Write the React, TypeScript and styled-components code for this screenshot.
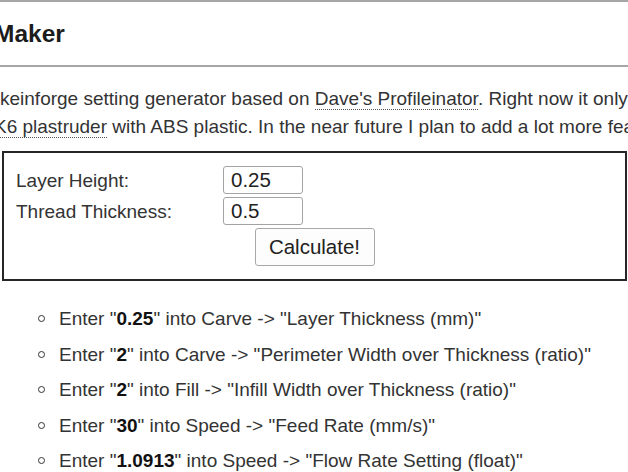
import React from 'react';
import styled, { createGlobalStyle } from 'styled-components';

const GlobalStyle = createGlobalStyle`
  html, body {
    margin: 0;
    padding: 0;
    background: #fff;
    overflow: hidden;
  }
  body {
    width: 628px;
    height: 472px;
    font-family: "Liberation Sans", Arial, sans-serif;
    color: #333;
  }
`;

type Step = { value: string; tab: string; field: string };

const steps: Step[] = [
  { value: '0.25', tab: 'Carve', field: 'Layer Thickness (mm)' },
  { value: '2', tab: 'Carve', field: 'Perimeter Width over Thickness (ratio)' },
  { value: '2', tab: 'Fill', field: 'Infill Width over Thickness (ratio)' },
  { value: '30', tab: 'Speed', field: 'Feed Rate (mm/s)' },
  { value: '1.0913', tab: 'Speed', field: 'Flow Rate Setting (float)' },
];

const Page = styled.div`
  width: 628px;
  overflow: hidden;
`;

const Header = styled.h1`
  margin: 0;
  border-top: 2px solid #a6a6a6;
  border-bottom: 2px solid #a6a6a6;
  padding: 18px 0 17px;
  font-size: 24.5px;
  line-height: 28px;
  font-weight: bold;
  color: #1c1c1c;
  white-space: nowrap;
`;

const Clipped = styled.span<{ $shift: number }>`
  display: block;
  margin-left: ${(p) => p.$shift}px;
  white-space: nowrap;
`;

const Intro = styled.p`
  margin: 18px 0 10px;
  font-size: 19px;
  line-height: 28px;
`;

const Link = styled.a`
  color: inherit;
  text-decoration: none;
  border-bottom: 1px dotted #555;
`;

const Calculator = styled.form`
  margin: 0 1px 0 2px;
  border: 2px solid #262626;
  padding: 13px 12px;
  display: flex;
  flex-direction: column;
  gap: 3px;
`;

const Fields = styled.div`
  display: grid;
  grid-template-columns: 207px 80px;
  grid-auto-rows: 28px;
  row-gap: 3px;
  align-items: center;
`;

const Label = styled.label`
  font-size: 19px;
  line-height: 28px;
  transform: translateY(1px);
`;

const Field = styled.input`
  box-sizing: border-box;
  width: 80px;
  height: 28px;
  border: 1px solid #a3a3a3;
  border-radius: 3px;
  padding: 0 7px;
  font-family: inherit;
  font-size: 20.5px;
  color: #222;
  outline: none;
`;

const ButtonRow = styled.div`
  display: flex;
  justify-content: center;
`;

const Button = styled.button`
  box-sizing: border-box;
  width: 120px;
  height: 38px;
  border: 1px solid #a8a8a8;
  border-radius: 3px;
  background: #fdfdfd;
  font-family: inherit;
  font-size: 20.5px;
  color: #222;
  padding: 0;
`;

const Steps = styled.ul`
  margin: 20px 0 0;
  padding: 0 0 0 59px;
  list-style: none;
  font-size: 19px;
  line-height: 35.5px;
`;

const StepItem = styled.li`
  position: relative;
  white-space: nowrap;

  &::before {
    content: '';
    position: absolute;
    left: -21px;
    top: 14px;
    width: 5px;
    height: 5px;
    border: 1.6px solid #333;
    border-radius: 50%;
  }
`;

const Value = styled.b`
  color: #111;
`;

export default function App() {
  return (
    <Page>
      <GlobalStyle />
      <Header>
        <Clipped $shift={-6}>Maker</Clipped>
      </Header>
      <Intro>
        <Clipped $shift={0}>
          keinforge setting generator based on <Link href="#">Dave's Profileinator</Link>. Right now it only
          supports the
        </Clipped>
        <Clipped $shift={-6}>
          <Link href="#">K6 plastruder</Link> with ABS plastic. In the near future I plan to add a lot more features.
        </Clipped>
      </Intro>
      <Calculator onSubmit={(e) => e.preventDefault()}>
        <Fields>
          <Label>Layer Height:</Label>
          <Field defaultValue="0.25" />
          <Label>Thread Thickness:</Label>
          <Field defaultValue="0.5" />
        </Fields>
        <ButtonRow>
          <Button type="submit">Calculate!</Button>
        </ButtonRow>
      </Calculator>
      <Steps>
        {steps.map((s, i) => (
          <StepItem key={i}>
            Enter "<Value>{s.value}</Value>" into {s.tab} -&gt; "{s.field}"
          </StepItem>
        ))}
      </Steps>
    </Page>
  );
}
